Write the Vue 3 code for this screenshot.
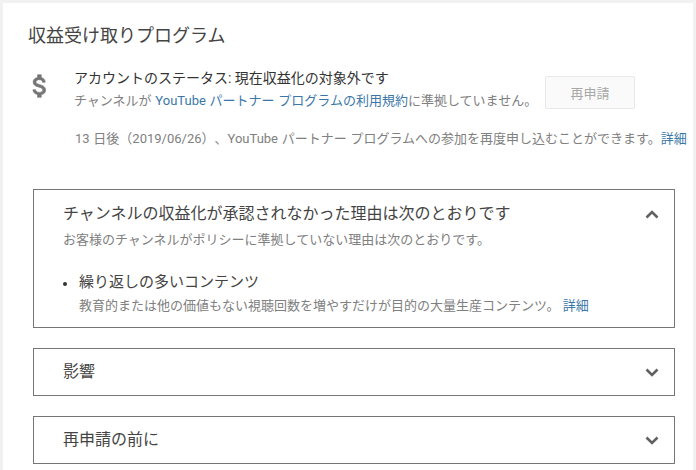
<script setup>
const collapsed = ['影響', '再申請の前に']
</script>

<template>
  <div class="page">
    <main class="card">
      <h1 class="title">収益受け取りプログラム</h1>
      <section class="status">
        <svg class="dollar" width="30" height="30" viewBox="0 0 24 24" aria-hidden="true">
          <path fill="#757575" stroke="#757575" stroke-width=".5" d="M11.8 10.9c-2.27-.59-3-1.2-3-2.15 0-1.09 1.01-1.85 2.7-1.85 1.78 0 2.44.85 2.5 2.1h2.21c-.07-1.72-1.12-3.3-3.21-3.81V3h-3v2.16c-1.94.42-3.5 1.68-3.5 3.61 0 2.31 1.91 3.46 4.7 4.13 2.5.6 3 1.48 3 2.41 0 .69-.49 1.79-2.7 1.79-2.06 0-2.87-.92-2.98-2.1h-2.2c.12 2.19 1.76 3.42 3.68 3.83V21h3v-2.15c1.95-.37 3.5-1.5 3.5-3.55 0-2.84-2.43-3.81-4.7-4.4z"/>
        </svg>
        <div class="status-text">
          <div class="status-line">アカウントのステータス: 現在収益化の対象外です</div>
          <div class="status-sub">チャンネルが <a class="link">YouTube パートナー プログラムの利用規約</a>に準拠していません。</div>
        </div>
        <button class="reapply" disabled>再申請</button>
      </section>
      <p class="notice">13 日後（2019/06/26）、YouTube パートナー プログラムへの参加を再度申し込むことができます。<a class="link">詳細</a></p>

      <div class="panels">
        <section class="panel open">
          <div class="panel-head">
            <h2 class="panel-title">チャンネルの収益化が承認されなかった理由は次のとおりです</h2>
            <svg class="chev" width="24" height="24" viewBox="0 0 24 24" aria-hidden="true"><path fill="none" stroke="#616161" stroke-width="2.6" d="M6.500 15.500 12 10l5.500 5.500"/></svg>
          </div>
          <p class="panel-desc">お客様のチャンネルがポリシーに準拠していない理由は次のとおりです。</p>
          <div class="reason">
            <span class="bullet"></span>
            <div>
              <div class="reason-title">繰り返しの多いコンテンツ</div>
              <div class="reason-desc">教育的または他の価値もない視聴回数を増やすだけが目的の大量生産コンテンツ。 <a class="link">詳細</a></div>
            </div>
          </div>
        </section>
        <section v-for="label in collapsed" :key="label" class="panel closed">
          <h2 class="panel-title">{{ label }}</h2>
          <svg class="chev" width="24" height="24" viewBox="0 0 24 24" aria-hidden="true"><path fill="none" stroke="#616161" stroke-width="2.6" d="M6.500 9.500 12 15l5.500-5.500"/></svg>
        </section>
      </div>
    </main>
  </div>
</template>

<style>
html, body { margin: 0; background: #f1f1f1; }
</style>

<style scoped>
.page {
  width: 696px;
  height: 470px;
  overflow: hidden;
  padding: 3px 3px 0;
  box-sizing: border-box;
  background: #f1f1f1;
  font-family: Roboto, "Noto Sans CJK JP", sans-serif;
  color: #212121;
  text-spacing-trim: space-all;
}
.card {
  background: #fff;
  height: 467px;
  padding: 19px 18px 0 25px;
  box-sizing: border-box;
}
.title {
  margin: 0;
  font-size: 18px;
  font-weight: 400;
  line-height: 28px;
  color: #444;
}
.status {
  display: flex;
  align-items: flex-start;
  margin-top: 18px;
}
.dollar { margin: 3px 0 0 -3px; flex: none; }
.status-text { margin-left: 19px; width: 471px; flex: none; }
.status-line { font-size: 14px; line-height: 20px; color: #333; }
.status-sub { font-size: 13px; line-height: 18px; margin-top: 4px; color: #808080; white-space: nowrap; word-spacing: 0.5px; }
.link { color: #3a77a8; }
.reapply {
  width: 90px;
  height: 33px;
  margin-top: 8px;
  border: 1px solid #e8e8e8;
  border-radius: 2px;
  background: #fafafa;
  color: #a8a8a8;
  font: 13px Roboto, "Noto Sans CJK JP", sans-serif;
  padding: 0;
}
.notice {
  margin: 20px 0 0 47px;
  font-size: 13px;
  line-height: 18px;
  color: #808080;
  white-space: nowrap;
  word-spacing: 0.5px;
}
.panels {
  margin: 41px 0 0 5px;
  display: flex;
  flex-direction: column;
  gap: 20px;
  width: 642px;
}
.panel {
  border: 1px solid #757575;
  box-sizing: border-box;
}
.panel-title {
  margin: 0;
  font-size: 16px;
  font-weight: 400;
  line-height: 24px;
  color: #444;
}
.open { height: 139px; padding: 12px 10px 0 29px; }
.panel-head { display: flex; justify-content: space-between; align-items: center; }
.panel-desc { margin: 5px 0 0; font-size: 13px; line-height: 18px; color: #808080; }
.reason { display: flex; margin-top: 22px; }
.bullet {
  width: 4px;
  height: 4px;
  border-radius: 50%;
  background: #333;
  margin: 11px 12px 0 0;
  flex: none;
}
.reason-title { font-size: 15px; line-height: 22px; color: #444; }
.reason-desc { margin-top: 4px; font-size: 13px; line-height: 18px; color: #808080; }
.closed {
  height: 48px;
  padding: 0 10px 0 29px;
  display: flex;
  justify-content: space-between;
  align-items: center;
}
</style>
